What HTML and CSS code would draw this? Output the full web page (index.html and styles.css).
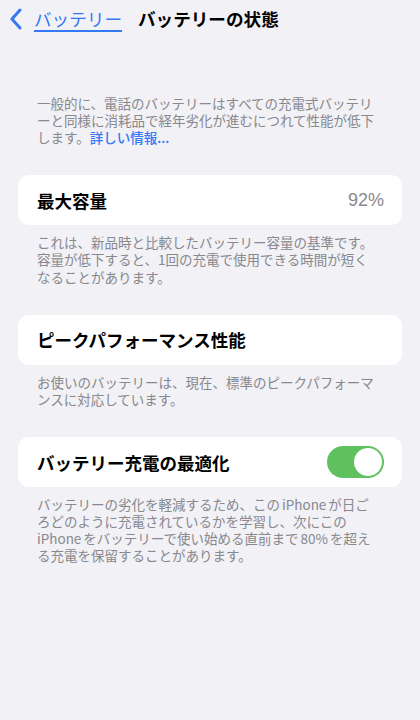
FILE: index.html
```html
<!DOCTYPE html>
<html lang="ja">
<head>
<meta charset="utf-8">
<link rel="stylesheet" href="styles.css">
</head>
<body>
<header class="nav">
  <a class="back" href="#">
    <svg class="chev" width="14" height="22" viewBox="0 0 14 22"><path d="M11 2 L3 11 L11 20" fill="none" stroke="#3478f6" stroke-width="3" stroke-linecap="round" stroke-linejoin="round"/></svg>
    <span class="back-label">バッテリー</span>
  </a>
  <h1 class="title">バッテリーの状態</h1>
</header>
<main class="content">
  <div class="note intro">
    <span class="ln">一般的に、電話のバッテリーはすべての充電式バッテリ</span>
    <span class="ln">ーと同様に消耗品で経年劣化が進むにつれて性能が低下</span>
    <span class="ln">します。<a class="more" href="#">詳しい情報...</a></span>
  </div>

  <div class="card">
    <span class="label">最大容量</span>
    <span class="value">92%</span>
  </div>
  <div class="note foot">
    <span class="ln">これは、新品時と比較したバッテリー容量の基準です。</span>
    <span class="ln">容量が低下すると、1回の充電で使用できる時間が短く</span>
    <span class="ln">なることがあります。</span>
  </div>

  <div class="card">
    <span class="label">ピークパフォーマンス性能</span>
  </div>
  <div class="note foot">
    <span class="ln">お使いのバッテリーは、現在、標準のピークパフォーマ</span>
    <span class="ln">ンスに対応しています。</span>
  </div>

  <div class="card">
    <span class="label">バッテリー充電の最適化</span>
    <span class="toggle"><span class="knob"></span></span>
  </div>
  <div class="note foot last">
    <span class="ln">バッテリーの劣化を軽減するため、この<span class="lat">iPhone</span>が日ご</span>
    <span class="ln">ろどのように充電されているかを学習し、次にこの</span>
    <span class="ln"><span class="lat first">iPhone</span>をバッテリーで使い始める直前まで<span class="lat">80%</span>を超え</span>
    <span class="ln">る充電を保留することがあります。</span>
  </div>
</main>
</body>
</html>
```

FILE: styles.css
```css
html, body {
  margin: 0;
  padding: 0;
  background: #f1f1f6;
  font-family: "Noto Sans CJK JP", "Noto Sans", sans-serif;
  color: #000;
}
.nav {
  height: 38px;
  display: flex;
  align-items: center;
  padding-left: 9px;
}
.back {
  display: flex;
  align-items: center;
  text-decoration: none;
  color: #3478f6;
}
.chev {
  margin-right: 11px;
}
.back-label {
  font-size: 17.6px;
  line-height: 22px;
  color: #3478f6;
  text-decoration: underline;
  text-decoration-thickness: 1.5px;
  text-underline-offset: 4px;
}
.title {
  margin: 0 0 0 16px;
  font-size: 17.6px;
  font-weight: 700;
  line-height: 22px;
}
.content {
  padding: 0 18px;
}
.note {
  padding: 0 19px;
  font-size: 13.5px;
  color: #88888d;
  white-space: nowrap;
}
.ln {
  display: block;
  height: 17.3px;
  line-height: 17.3px;
}
.intro {
  margin-top: 57px;
}
.intro .ln {
  height: 17px;
  line-height: 17px;
}
.more {
  color: #3478f6;
  text-decoration: none;
  font-weight: 500;
}
.card {
  margin-top: 29px;
  height: 50px;
  background: #fff;
  border-radius: 11px;
  display: flex;
  align-items: center;
  justify-content: space-between;
  padding: 0 18px 0 19px;
}
.label {
  font-size: 17.5px;
  font-weight: 700;
}
.value {
  font-family: "Liberation Sans", "Noto Sans", sans-serif;
  font-size: 18px;
  color: #88888d;
}
.toggle {
  width: 57px;
  height: 32px;
  border-radius: 16px;
  background: #5fc15e;
  display: flex;
  align-items: center;
  justify-content: flex-end;
  padding: 2px;
  box-sizing: border-box;
}
.knob {
  width: 28px;
  height: 28px;
  border-radius: 50%;
  background: #fff;
}
.foot {
  margin-top: 9px;
}
.last .ln {
  height: 17px;
  line-height: 17px;
}
.lat {
  margin: 0 2px;
}
.lat.first {
  margin-left: 0;
}
```
